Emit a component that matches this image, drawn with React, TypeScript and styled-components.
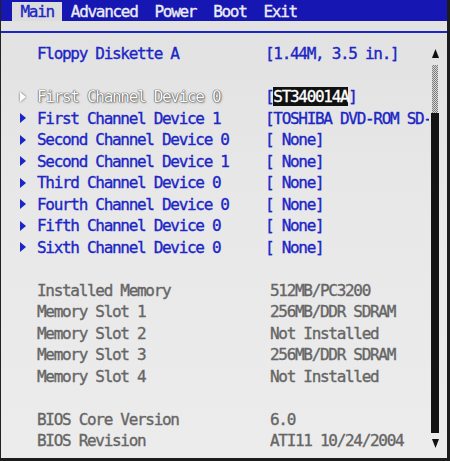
import React from 'react';
import styled, { createGlobalStyle } from 'styled-components';

const BLUE = '#1c26c6';
const BAR_BLUE = '#1616b2';

const GlobalStyle = createGlobalStyle`
  html, body {
    margin: 0;
    padding: 0;
    background: #1a1a1a;
  }
`;

type Tone = 'blue' | 'gray' | 'white';

interface Row {
  label?: string;
  value?: string;
  tone?: Tone;
  sub?: boolean;
  selected?: boolean;
}

const rows: Row[] = [
  { label: 'Floppy Diskette A', value: '[1.44M, 3.5 in.]', tone: 'blue' },
  {},
  { label: 'First Channel Device 0', value: 'ST340014A', tone: 'white', sub: true, selected: true },
  { label: 'First Channel Device 1', value: '[TOSHIBA DVD-ROM SD-', tone: 'blue', sub: true },
  { label: 'Second Channel Device 0', value: '[ None]', tone: 'blue', sub: true },
  { label: 'Second Channel Device 1', value: '[ None]', tone: 'blue', sub: true },
  { label: 'Third Channel Device 0', value: '[ None]', tone: 'blue', sub: true },
  { label: 'Fourth Channel Device 0', value: '[ None]', tone: 'blue', sub: true },
  { label: 'Fifth Channel Device 0', value: '[ None]', tone: 'blue', sub: true },
  { label: 'Sixth Channel Device 0', value: '[ None]', tone: 'blue', sub: true },
  {},
  { label: 'Installed Memory', value: '512MB/PC3200', tone: 'gray' },
  { label: 'Memory Slot 1', value: '256MB/DDR SDRAM', tone: 'gray' },
  { label: 'Memory Slot 2', value: 'Not Installed', tone: 'gray' },
  { label: 'Memory Slot 3', value: '256MB/DDR SDRAM', tone: 'gray' },
  { label: 'Memory Slot 4', value: 'Not Installed', tone: 'gray' },
  {},
  { label: 'BIOS Core Version', value: '6.0', tone: 'gray' },
  { label: 'BIOS Revision', value: 'ATI11 10/24/2004', tone: 'gray' },
];

const tabs = ['Main', 'Advanced', 'Power', 'Boot', 'Exit'];

const toneColor = (t?: Tone) =>
  t === 'gray' ? '#666' : t === 'white' ? '#fcfcfc' : BLUE;

const Frame = styled.div`
  width: 450px;
  height: 461px;
  box-sizing: border-box;
  border-left: 1px solid #222;
  border-right: 3px solid #1c1c1c;
  border-bottom: 3px solid #1c1c1c;
  background: linear-gradient(180deg, #e1e1e1 0%, #e8e8e8 45%, #ececec 100%);
  overflow: hidden;
  font-family: 'DejaVu Sans Mono', 'Liberation Mono', monospace;
  font-size: 16px;
  letter-spacing: -1.3px;
  -webkit-text-stroke: 0.35px currentColor;
`;

const MenuBar = styled.div`
  display: flex;
  align-items: flex-end;
  height: 21px;
  padding-left: 11px;
  background: ${BAR_BLUE};
`;

const Tab = styled.div<{ $active?: boolean }>`
  height: 19px;
  line-height: 19px;
  padding: 0 8.5px;
  color: ${(p) => (p.$active ? BLUE : '#ececf4')};
  background: ${(p) => (p.$active ? '#dcdcdc' : 'transparent')};
  white-space: pre;
`;

const Body = styled.div`
  margin-top: 10px;
  border-top: 2px solid ${BLUE};
  display: grid;
  grid-template-columns: 1fr 8px;
  column-gap: 2px;
  padding: 10px 8px 0 19px;
`;

const List = styled.div`
  display: flex;
  flex-direction: column;
  min-width: 0;
`;

const Line = styled.div`
  display: grid;
  grid-template-columns: 17px 228px 1fr;
  height: 21.5px;
  line-height: 21.5px;
  white-space: pre;
`;

const Marker = styled.div<{ $glow?: boolean }>`
  display: flex;
  align-items: center;
  filter: ${(p) => (p.$glow ? 'drop-shadow(0 0 1px #555)' : 'none')};
`;

const Label = styled.div<{ $tone?: Tone }>`
  color: ${(p) => toneColor(p.$tone)};
  -webkit-text-stroke: ${(p) => (p.$tone === 'white' ? '0' : '0.35px currentColor')};
  text-shadow: ${(p) =>
    p.$tone === 'white'
      ? '0 0 1px #3a3a3a, 0 0 1px #3a3a3a, 1px 1px 2px #8a8a8a'
      : 'none'};
`;

const Value = styled.div<{ $tone?: Tone }>`
  overflow: hidden;
  color: ${(p) => (p.$tone === 'gray' ? '#666' : BLUE)};
  padding-left: ${(p) => (p.$tone === 'gray' ? '5px' : '0')};
`;

const Highlight = styled.span`
  background: #111;
  color: #fff;
`;

const Scroll = styled.div`
  display: flex;
  flex-direction: column;
  align-items: center;
`;

const ArrowCell = styled.div`
  height: 21.5px;
  display: flex;
  align-items: center;
  justify-content: center;
`;

const Dotted = styled.div`
  width: 6px;
  height: 48px;
  margin-top: 0.5px;
  background: repeating-conic-gradient(#7a7a7a 0 25%, #d8d8d8 0 50%) 0 0 / 2px 2px;
`;

const Thumb = styled.div`
  width: 8px;
  height: 320px;
  background: #141414;
`;

const Pointer = ({ color }: { color: string }) => (
  <svg width="6" height="10" viewBox="0 0 6 10">
    <polygon points="0,0 6,5 0,10" fill={color} />
  </svg>
);

const Tri = ({ up }: { up?: boolean }) => (
  <svg width="7" height="9" viewBox="0 0 7 9">
    <polygon points={up ? '3.5,0 7,9 0,9' : '0,0 7,0 3.5,9'} fill="#111" />
  </svg>
);

const App: React.FC = () => (
  <>
    <GlobalStyle />
    <Frame>
      <MenuBar>
        {tabs.map((t, i) => (
          <Tab key={t} $active={i === 0}>
            {t}
          </Tab>
        ))}
      </MenuBar>
      <Body>
        <List>
          {rows.map((r, i) => (
            <Line key={i}>
              <Marker $glow={r.selected}>
                {r.sub && <Pointer color={r.selected ? '#fcfcfc' : BLUE} />}
              </Marker>
              <Label $tone={r.tone}>{r.label}</Label>
              <Value $tone={r.tone}>
                {r.selected ? (
                  <>
                    [<Highlight>{r.value}</Highlight>]
                  </>
                ) : (
                  r.value
                )}
              </Value>
            </Line>
          ))}
        </List>
        <Scroll>
          <ArrowCell>
            <Tri up />
          </ArrowCell>
          <Dotted />
          <Thumb />
          <ArrowCell>
            <Tri />
          </ArrowCell>
        </Scroll>
      </Body>
    </Frame>
  </>
);

export default App;
